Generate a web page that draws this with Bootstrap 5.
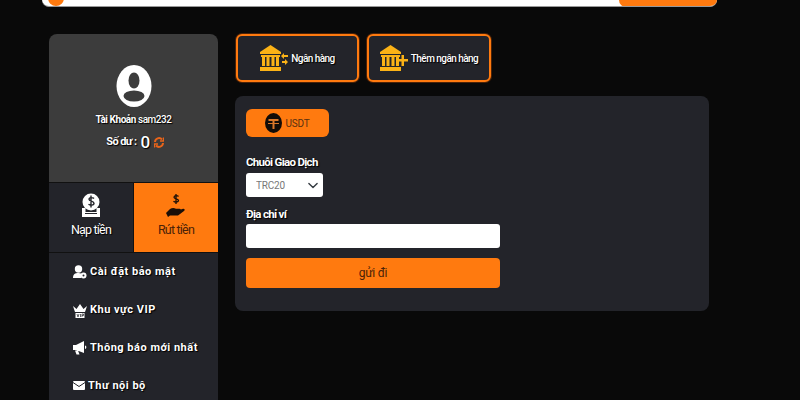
<!DOCTYPE html>
<html lang="vi">
<head>
  <meta charset="UTF-8">
  <title>Rút tiền</title>
  <link href="https://cdn.jsdelivr.net/npm/bootstrap@5.3.0/dist/css/bootstrap.min.css" rel="stylesheet">
  <style>
    html, body { height: 400px; overflow: hidden; }
    body { background: #090909; font-family: Roboto, "Liberation Sans", sans-serif; color: #fff; font-size: 12px; }
    .topbar { width: 675px; height: 7px; margin-left: 42px; background: #fff; border-bottom: 1px solid #999; border-radius: 0 0 9px 9px; overflow: hidden; }
    .topdot { width: 16px; height: 16px; margin: -10px 0 0 6px; border-radius: 50%; background: #ff7a0f; }
    .topbtn { width: 98px; height: 7px; background: #ff7a0f; border-radius: 0 0 9px 14px; }
    .layout { padding: 27px 0 0 49px; gap: 17px; }
    .sidebar { width: 169px; }
    .profile { height: 149px; background: #3c3c3c; border-radius: 8px 8px 0 0; padding-top: 31px; border-bottom: 1px solid #111; }
    .soft { text-shadow: 0 0 1px #000, 1px 1px 1px #000; }
    .acct { font-size: 10px; font-weight: 700; margin-top: 6px; line-height: 14px; letter-spacing: -.45px; }
    .acct span { font-weight: 500; }
    .bal { font-size: 11px; font-weight: 700; margin-top: 6px; margin-left: 3px; line-height: 18px; letter-spacing: -.6px; }
    .bal b { font-size: 17px; font-weight: 500; }
    .tabs { height: 70px; background: #23242a; border-bottom: 1px solid #111; }
    .tabcell { width: 84px; padding-top: 10px; font-size: 12.5px; line-height: 14px; letter-spacing: -.8px; }
    .tabcell svg { display: block; margin: 0 auto 5px; }
    .tabon { width: 85px; background: #ff7a0f; color: #4a2208; border-left: 1px solid #111; }
    .menu { background: #23242a; height: 150px; padding: 9px 0 0 24px; }
    .menuitem { height: 38px; gap: 3px; font-size: 11px; font-weight: 700; letter-spacing: .5px; line-height: 20px; align-items: flex-start; }
    .menuitem svg { margin-top: 3px; flex: none; }
    .maincol { width: 474px; }
    .bankrow { gap: 8px; padding-left: 1px; }
    .bankbtn { height: 48px; background: #23242a; border: 2px solid #ff7a0f; border-radius: 6px; font-size: 10px; font-weight: 500; color: #fff; padding: 0; gap: 3px; letter-spacing: -.55px; box-shadow: 0 0 0 1px #4a2208; }
    .bankone { width: 123px; }
    .banktwo { width: 124px; }
    .formpanel { height: 215px; background: #23242a; border-radius: 8px; margin-top: 14px; padding: 13px 11px; }
    .usdtbtn { width: 83px; height: 28px; background: #ff7a0f; border-radius: 6px; color: #5a3010; font-size: 10px; gap: 3px; letter-spacing: -.2px; }
    .fieldlabel { font-size: 11.5px; font-weight: 700; line-height: 14px; letter-spacing: -.7px; }
    .labeltop { margin-top: 18px; }
    .labelnext { margin-top: 10px; }
    .chainselect { width: 77px; height: 24px; margin-top: 4px; font-size: 10px; letter-spacing: -.2px; padding: 0 0 0 10px; color: #777; background-position: right 3px center; background-size: 14px 11px; border-radius: 3px; border: 0; font-family: Roboto, sans-serif; }
    .walletinput { width: 254px; height: 24px; margin-top: 3px; border-radius: 3px; border: 0; }
    .sendbtn { width: 254px; height: 30px; margin-top: 10px; background: #ff7a0f; border-radius: 4px; color: #4a2208; font-size: 12px; letter-spacing: -.3px; line-height: 30px; border: 0; padding: 0; }
    .sendbtn:hover { background: #ff7a0f; color: #4a2208; }
  </style>
</head>
<body>
  <div class="topbar d-flex justify-content-between">
    <div class="topdot"></div>
    <div class="topbtn"></div>
  </div>

  <div class="layout d-flex align-items-start">
    <div class="sidebar">
      <div class="profile text-center soft">
        <svg width="36" height="42" viewBox="0 0 36 42" class="d-block mx-auto">
          <ellipse cx="18" cy="21" rx="17.500" ry="21" fill="#fff"/>
          <ellipse cx="18" cy="15.500" rx="5.500" ry="8" fill="#3c3c3c"/>
          <ellipse cx="18" cy="31" rx="10.500" ry="5.500" fill="#3c3c3c"/>
        </svg>
        <div class="acct">Tài Khoản <span>sam232</span></div>
        <div class="bal d-flex justify-content-center align-items-center gap-1">
          <span>Số dư :</span><b>0</b>
          <svg width="10" height="11" viewBox="0 0 10 11" fill="none" stroke="#e8641a" stroke-width="2">
            <path d="M1 5a4 4 0 0 1 7-2.500"/><path d="M9 6a4 4 0 0 1-7 2.500"/>
            <path d="M9.500 0.500v3.500h-3.500M0.500 10.500v-3.500h3.500" stroke-width="1.400"/>
          </svg>
        </div>
      </div>

      <div class="tabs d-flex text-center">
        <div class="tabcell soft">
          <svg width="20" height="25" viewBox="0 0 20 25">
            <circle cx="10" cy="9" r="8.500" fill="#fff"/>
            <path d="M13 5.500c-1-1.200-5-1.500-5 .800s5 1.500 5 4-4 2.200-5.500.900M10 2.500v12" stroke="#23242a" stroke-width="1.400" fill="none"/>
            <path d="M1 15h3.500v4h11v-4H19v9H1z" fill="#fff"/>
            <rect x="4" y="20" width="12" height="1" fill="#23242a"/>
          </svg>
          Nạp tiền
        </div>
        <div class="tabcell tabon">
          <svg width="20" height="25" viewBox="0 0 20 25">
            <path d="M12.500 3.500c-.8-1.200-4.500-1.200-4.500.800s4.500 1.200 4.500 3.200-3.800 1.800-5 .700M10 1v10" stroke="#1a0f08" stroke-width="1.300" fill="none"/>
            <path d="M0 20l4-4c2-1.200 4-1.200 6-.3h3.500c1.500 0 1.500 2 0 2H10.500l6-1.800c2-.5 3 1 1.500 2l-6 4.600H4L2 24z" fill="#1a0f08"/>
          </svg>
          Rút tiền
        </div>
      </div>

      <div class="menu soft">
        <div class="menuitem d-flex">
          <svg width="14" height="14" viewBox="0 0 14 14" fill="#fff"><circle cx="5.500" cy="4" r="3.700"/><path d="M0 13c0-4 2-5 5.500-5 1 0 2 .2 2.500.500V13z"/><circle cx="10.500" cy="10.500" r="3"/><circle cx="10.500" cy="10.500" r="1" fill="#23242a"/></svg>
          <span>Cài đặt bảo mật</span>
        </div>
        <div class="menuitem d-flex">
          <svg width="14" height="15" viewBox="0 0 14 15" fill="#fff"><path d="M0 3l3.500 3L7 1l3.500 5L14 3l-2 6H2z"/><rect x="2.500" y="10" width="9" height="5"/><path d="M4 11l1 3 1-3M7.500 11v3M9 14v-3h1.500v1.500H9" stroke="#23242a" stroke-width=".7" fill="none"/></svg>
          <span>Khu vực VIP</span>
        </div>
        <div class="menuitem d-flex">
          <svg width="14" height="14" viewBox="0 0 14 14" fill="#fff"><path d="M0 4h3l8-4v12L3 9H0zM2 9.500h3l1.500 4H3.500zM12 4.500c1.800 0 1.800 3.500 0 3.500z"/></svg>
          <span>Thông báo mới nhất</span>
        </div>
        <div class="menuitem d-flex">
          <svg width="12" height="13" viewBox="0 0 12 13"><rect y="2" width="12" height="9" rx="1" fill="#fff"/><path d="M0 3.500l6 4 6-4" stroke="#23242a" fill="none"/></svg>
          <span>Thư nội bộ</span>
        </div>
      </div>
    </div>

    <div class="maincol">
      <div class="bankrow d-flex">
        <button type="button" class="bankbtn bankone d-flex align-items-center justify-content-center soft">
          <svg width="28" height="26" viewBox="0 0 28 26" fill="#fbb216">
            <path d="M10.500 0L21 7v2H0V7z"/><rect x="1" y="10" width="19" height="2"/><rect x="2" y="12" width="3" height="9"/><rect x="6.500" y="12" width="3" height="9"/><rect x="11.500" y="12" width="3" height="9"/><rect x="16" y="12" width="3" height="9"/><rect x="0" y="22" width="21" height="4"/>
            <path d="M28 10h-4V8l-3 3 3 3v-2h4zM22 16h3v-2l3 3-3 3v-2h-3z"/>
          </svg>
          <span>Ngân hàng</span>
        </button>
        <button type="button" class="bankbtn banktwo d-flex align-items-center justify-content-center soft">
          <svg width="28" height="26" viewBox="0 0 28 26" fill="#fbb216">
            <path d="M10.500 0L21 7v2H0V7z"/><rect x="1" y="10" width="19" height="2"/><rect x="2" y="12" width="3" height="9"/><rect x="6.500" y="12" width="3" height="9"/><rect x="11.500" y="12" width="3" height="9"/><rect x="16" y="12" width="3" height="9"/><rect x="0" y="22" width="21" height="4"/>
            <path d="M21.500 10h2.500v4h4v2.500h-4v4.500h-2.500v-4.500h-4V14h4z"/>
          </svg>
          <span>Thêm ngân hàng</span>
        </button>
      </div>

      <div class="formpanel">
        <div class="usdtbtn d-flex align-items-center justify-content-center">
          <svg width="17" height="20" viewBox="0 0 17 20">
            <ellipse cx="8.500" cy="10" rx="8.500" ry="10" fill="#120c08"/>
            <path d="M3.500 6h10v2h-4v8h-2V8h-4z" fill="#d9772a"/><path d="M3 10.500h11" stroke="#d9772a"/>
          </svg>
          <span>USDT</span>
        </div>
        <div class="fieldlabel labeltop soft">Chuỗi Giao Dịch</div>
        <select class="form-select chainselect"><option>TRC20</option></select>
        <div class="fieldlabel labelnext soft">Địa chỉ ví</div>
        <input type="text" class="form-control walletinput">
        <button type="button" class="btn sendbtn d-block">gửi đi</button>
      </div>
    </div>
  </div>
</body>
</html>
